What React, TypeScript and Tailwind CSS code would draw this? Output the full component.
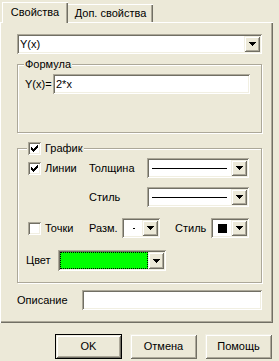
import { ReactNode } from "react";

const sunken =
  "shadow-[inset_1px_1px_0_#aca899,inset_-1px_-1px_0_#fff,inset_2px_2px_0_#716f64,inset_-2px_-2px_0_#f1efe2]";
const raised =
  "shadow-[inset_1px_1px_0_#f1efe2,inset_-1px_-1px_0_#716f64,inset_2px_2px_0_#fff,inset_-2px_-2px_0_#aca899]";
const etched = "border border-[#aca899] shadow-[inset_1px_1px_0_#fff,1px_1px_0_#fff]";

function Arrow() {
  return (
    <svg width="7" height="4" viewBox="0 0 7 4" shapeRendering="crispEdges">
      <rect x="0" y="0" width="7" height="1" />
      <rect x="1" y="1" width="5" height="1" />
      <rect x="2" y="2" width="3" height="1" />
      <rect x="3" y="3" width="1" height="1" />
    </svg>
  );
}

function Combo({ className, children }: { className: string; children?: ReactNode }) {
  return (
    <div className={`flex p-[2px] bg-white ${sunken} ${className}`}>
      <div className="flex-1 flex items-center min-w-0">{children}</div>
      <div className={`w-[16px] flex items-center justify-center bg-[#ece9d8] ${raised}`}>
        <Arrow />
      </div>
    </div>
  );
}

function Check({ checked }: { checked?: boolean }) {
  const ys = [2, 3, 4, 3, 2, 1, 0];
  return (
    <div className={`w-[13px] h-[13px] shrink-0 bg-white flex items-center justify-center ${sunken}`}>
      {checked && (
        <svg width="7" height="7" viewBox="0 0 7 7" shapeRendering="crispEdges">
          {ys.map((y, i) => (
            <rect key={i} x={i} y={y} width="1" height="3" />
          ))}
        </svg>
      )}
    </div>
  );
}

function Button({ label, main }: { label: string; main?: boolean }) {
  return (
    <div
      className={`w-[67px] h-[25px] flex items-center justify-center bg-[#ece9d8] ${
        main ? "border border-black" : ""
      } ${raised}`}
    >
      {label}
    </div>
  );
}

export default function App() {
  return (
    <div className="w-[279px] h-[361px] bg-[#ece9d8] pt-[2px] text-[11px] leading-[13px] text-black font-['Liberation_Sans',Arial,sans-serif] overflow-hidden">
      {/* tabs */}
      <div className="flex items-start h-[20px] pl-[2px]">
        <div className="relative z-10 w-[66px] h-[21px] pb-[1px] flex items-center justify-center bg-[#ece9d8] shadow-[inset_1px_1px_0_#fff,inset_-1px_0_0_#716f64,inset_-2px_0_0_#aca899]">
          Свойства
        </div>
        <div className="-ml-[2px] mt-[2px] w-[87px] h-[18px] flex items-center justify-center pl-[2px] shadow-[inset_1px_1px_0_#fff,inset_-1px_0_0_#716f64,inset_-2px_0_0_#aca899]">
          Доп. свойства
        </div>
      </div>

      {/* panel */}
      <div className="w-[273px] h-[301px] pl-[17px] pt-[12px] shadow-[inset_1px_1px_0_#fff,inset_-1px_-1px_0_#716f64,inset_-2px_-2px_0_#aca899]">
        <Combo className="w-[245px] h-[20px]">
          <span className="pl-[1px]">Y(x)</span>
        </Combo>

        <div className={`relative mt-[10px] w-[245px] h-[69px] pl-[7px] pt-[9px] ${etched}`}>
          <span className="absolute -top-[7px] left-[6px] px-[1px] bg-[#ece9d8]">Формула</span>
          <div className="flex items-center h-[20px]">
            <span className="w-[28px]">Y(x)=</span>
            <div className={`w-[197px] h-[20px] pl-[3px] flex items-center bg-white ${sunken}`}>2*x</div>
          </div>
        </div>

        <div className={`relative mt-[15px] w-[245px] h-[135px] pl-[10px] pt-[9px] ${etched}`}>
          <div className="absolute -top-[7px] left-[9px] h-[13px] px-[1px] flex items-center gap-[4px] bg-[#ece9d8]">
            <Check checked />
            <span>График</span>
          </div>

          <div className="flex items-center h-[20px]">
            <div className="w-[61px] flex items-center gap-[4px]">
              <Check checked />
              <span>Линии</span>
            </div>
            <span className="w-[58px]">Толщина</span>
            <Combo className="w-[102px] h-[20px]">
              <div className="ml-[3px] mr-[4px] h-px flex-1 bg-black" />
            </Combo>
          </div>

          <div className="flex items-center h-[20px] mt-[9px]">
            <div className="w-[61px]" />
            <span className="w-[58px]">Стиль</span>
            <Combo className="w-[102px] h-[20px]">
              <div className="ml-[3px] mr-[4px] h-px flex-1 bg-black" />
            </Combo>
          </div>

          <div className="flex items-center h-[20px] mt-[11px]">
            <div className="w-[61px] flex items-center gap-[4px]">
              <Check />
              <span>Точки</span>
            </div>
            <span className="w-[33px]">Разм.</span>
            <Combo className="w-[38px] h-[20px]">
              <div className="ml-[9px] w-[2px] h-[1px] bg-black" />
            </Combo>
            <div className="w-[15px]" />
            <span className="w-[36px]">Стиль</span>
            <Combo className="w-[38px] h-[20px]">
              <div className="ml-[5px] w-[9px] h-[9px] bg-black" />
            </Combo>
          </div>

          <div className="flex items-center h-[21px] mt-[12px] -ml-[2px]">
            <span className="w-[32px]">Цвет</span>
            <Combo className="w-[108px] h-[21px]">
              <div className="w-full h-full bg-[#00ff00] border border-dotted border-black" />
            </Combo>
          </div>
        </div>

        <div className="flex items-center h-[20px] mt-[7px]">
          <span className="w-[65px]">Описание</span>
          <div className={`w-[180px] h-[20px] bg-white ${sunken}`} />
        </div>
      </div>

      {/* buttons */}
      <div className="flex gap-[8px] pl-[55px] mt-[11px]">
        <Button label="OK" main />
        <Button label="Отмена" />
        <Button label="Помощь" />
      </div>
    </div>
  );
}
